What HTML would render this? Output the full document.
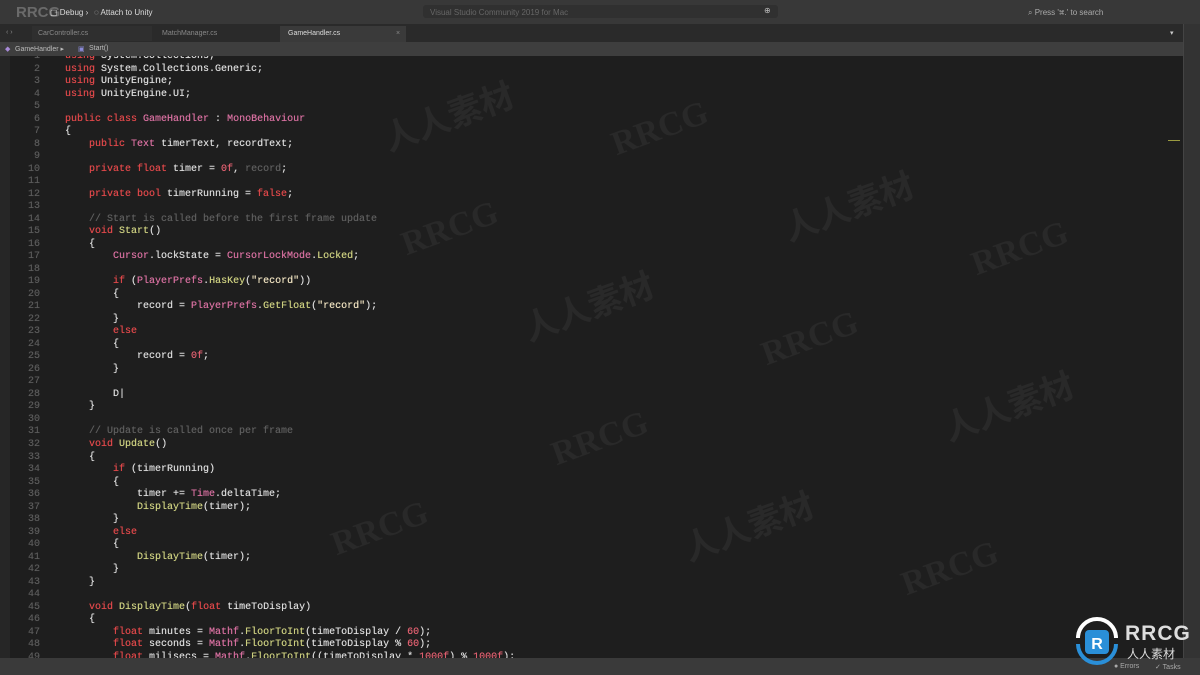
<!DOCTYPE html>
<html><head><meta charset="utf-8"><style>
*{margin:0;padding:0;box-sizing:border-box}
body{width:1200px;height:675px;background:#1f1f1f;overflow:hidden;position:relative;font-family:"Liberation Sans",sans-serif}
.top{position:absolute;left:0;top:0;width:1200px;height:24px;background:#383838;color:#ddd;font-size:8px}
.tabs{position:absolute;left:0;top:24px;width:1183px;height:18px;background:#2a2a2a;font-size:7px;color:#888}
.crumb{position:absolute;left:0;top:42px;width:1183px;height:14px;background:#3e3e3e;font-size:7px;color:#bbb}
.side{position:absolute;left:1183px;top:24px;width:17px;height:634px;background:#333;border-left:1px solid #444}
.status{position:absolute;left:0;top:658px;width:1200px;height:17px;background:#3a3a3a;font-size:7px;color:#aaa}
.editor{position:absolute;left:0;top:56px;width:1183px;height:602px;overflow:hidden;background:#1e1e1e}
.gut{position:absolute;left:0;top:0;width:10px;height:602px;background:#262626}
.code{position:absolute;left:0;top:-5px;font-family:"Liberation Mono",monospace;font-size:10px;line-height:12.51px;color:#dcdcdc;white-space:pre;text-shadow:0 0 0.4px currentColor}
.ln{display:inline-block;width:40px;text-align:right;color:#5a5a5a;margin-right:25px}
.k{color:#e0484a}.t{color:#d870a0}.m{color:#cdd080}.s{color:#efe2c0}.c{color:#5e5e5e}.n{color:#e06070}
.wm{position:absolute;color:rgba(255,255,255,0.05);font-size:34px;font-weight:bold;transform:rotate(-20deg);font-family:"Liberation Serif","Noto Sans CJK SC",serif;white-space:nowrap}
</style></head><body>
<div class="top">
<span style="position:absolute;left:50px;top:8px">▢ Debug ›</span>
<span style="position:absolute;left:94px;top:8px">◌ Attach to Unity</span>
<div style="position:absolute;left:423px;top:5px;width:355px;height:13px;background:#303030;border-radius:3px"></div>
<span style="position:absolute;left:430px;top:8px;color:#666">Visual Studio Community 2019 for Mac</span>
<span style="position:absolute;left:764px;top:6px;color:#bbb">⊕</span>
<span style="position:absolute;left:1028px;top:8px;color:#aaa">⌕ Press '⌘.' to search</span>
</div>
<div class="tabs">
<span style="position:absolute;left:6px;top:5px">‹ ›</span>
<div style="position:absolute;left:32px;top:2px;width:120px;height:15px;background:#2f2f2f"></div>
<span style="position:absolute;left:38px;top:6px">CarController.cs</span>
<span style="position:absolute;left:162px;top:6px">MatchManager.cs</span>
<div style="position:absolute;left:280px;top:2px;width:126px;height:16px;background:#3a3a3a"></div>
<span style="position:absolute;left:288px;top:6px;color:#ddd">GameHandler.cs</span>
<span style="position:absolute;left:396px;top:6px">×</span>
<span style="position:absolute;left:1170px;top:5px;color:#ccc">▾</span>
</div>
<div class="crumb">
<span style="position:absolute;left:5px;top:3px;color:#a88ad8">◆</span><span style="position:absolute;left:15px;top:3px">GameHandler ▸</span>
<span style="position:absolute;left:78px;top:3px;color:#8a8ad8">▣</span><span style="position:absolute;left:89px;top:3px">Start()</span>
</div>
<div class="editor"><div class="gut"></div>
<div class="code"><span class="ln">1</span><span class="k">using</span> System.Collections;
<span class="ln">2</span><span class="k">using</span> System.Collections.Generic;
<span class="ln">3</span><span class="k">using</span> UnityEngine;
<span class="ln">4</span><span class="k">using</span> UnityEngine.UI;
<span class="ln">5</span>
<span class="ln">6</span><span class="k">public class</span> <span class="t">GameHandler</span> : <span class="t">MonoBehaviour</span>
<span class="ln">7</span>{
<span class="ln">8</span>    <span class="k">public</span> <span class="t">Text</span> timerText, recordText;
<span class="ln">9</span>
<span class="ln">10</span>    <span class="k">private float</span> timer = <span class="n">0f</span>, <span class="c">record</span>;
<span class="ln">11</span>
<span class="ln">12</span>    <span class="k">private bool</span> timerRunning = <span class="k">false</span>;
<span class="ln">13</span>
<span class="ln">14</span>    <span class="c">// Start is called before the first frame update</span>
<span class="ln">15</span>    <span class="k">void</span> <span class="m">Start</span>()
<span class="ln">16</span>    {
<span class="ln">17</span>        <span class="t">Cursor</span>.lockState = <span class="t">CursorLockMode</span>.<span class="m">Locked</span>;
<span class="ln">18</span>
<span class="ln">19</span>        <span class="k">if</span> (<span class="t">PlayerPrefs</span>.<span class="m">HasKey</span>(<span class="s">"record"</span>))
<span class="ln">20</span>        {
<span class="ln">21</span>            record = <span class="t">PlayerPrefs</span>.<span class="m">GetFloat</span>(<span class="s">"record"</span>);
<span class="ln">22</span>        }
<span class="ln">23</span>        <span class="k">else</span>
<span class="ln">24</span>        {
<span class="ln">25</span>            record = <span class="n">0f</span>;
<span class="ln">26</span>        }
<span class="ln">27</span>
<span class="ln">28</span>        D|
<span class="ln">29</span>    }
<span class="ln">30</span>
<span class="ln">31</span>    <span class="c">// Update is called once per frame</span>
<span class="ln">32</span>    <span class="k">void</span> <span class="m">Update</span>()
<span class="ln">33</span>    {
<span class="ln">34</span>        <span class="k">if</span> (timerRunning)
<span class="ln">35</span>        {
<span class="ln">36</span>            timer += <span class="t">Time</span>.deltaTime;
<span class="ln">37</span>            <span class="m">DisplayTime</span>(timer);
<span class="ln">38</span>        }
<span class="ln">39</span>        <span class="k">else</span>
<span class="ln">40</span>        {
<span class="ln">41</span>            <span class="m">DisplayTime</span>(timer);
<span class="ln">42</span>        }
<span class="ln">43</span>    }
<span class="ln">44</span>
<span class="ln">45</span>    <span class="k">void</span> <span class="m">DisplayTime</span>(<span class="k">float</span> timeToDisplay)
<span class="ln">46</span>    {
<span class="ln">47</span>        <span class="k">float</span> minutes = <span class="t">Mathf</span>.<span class="m">FloorToInt</span>(timeToDisplay / <span class="n">60</span>);
<span class="ln">48</span>        <span class="k">float</span> seconds = <span class="t">Mathf</span>.<span class="m">FloorToInt</span>(timeToDisplay % <span class="n">60</span>);
<span class="ln">49</span>        <span class="k">float</span> milisecs = <span class="t">Mathf</span>.<span class="m">FloorToInt</span>((timeToDisplay * <span class="n">1000f</span>) % <span class="n">1000f</span>);
</div>
<div style="position:absolute;left:1168px;top:84px;width:12px;height:1px;background:#9a9a40"></div>
</div>
<div class="wm" style="left:380px;top:90px">人人素材</div>
<div class="wm" style="left:610px;top:110px">RRCG</div>
<div class="wm" style="left:400px;top:210px">RRCG</div>
<div class="wm" style="left:780px;top:180px">人人素材</div>
<div class="wm" style="left:970px;top:230px">RRCG</div>
<div class="wm" style="left:520px;top:280px">人人素材</div>
<div class="wm" style="left:760px;top:320px">RRCG</div>
<div class="wm" style="left:940px;top:380px">人人素材</div>
<div class="wm" style="left:550px;top:420px">RRCG</div>
<div class="wm" style="left:330px;top:510px">RRCG</div>
<div class="wm" style="left:680px;top:500px">人人素材</div>
<div class="wm" style="left:900px;top:550px">RRCG</div>
<div class="side"></div>
<div class="status">
<span style="position:absolute;left:1114px;top:5px">● Errors</span>
<span style="position:absolute;left:1155px;top:5px">✓ Tasks</span>
</div>
<svg style="position:absolute;left:1072px;top:616px" width="50" height="50" viewBox="0 0 50 50">
<path d="M6 22 A19 19 0 0 1 44 22" fill="none" stroke="#fff" stroke-width="4"/>
<path d="M6 28 A19 19 0 0 0 44 28" fill="none" stroke="#2a8fd8" stroke-width="4"/>
<rect x="13" y="14" width="24" height="24" rx="4" fill="#2a8fd8"/>
<text x="25" y="33" font-size="16" font-weight="bold" fill="#fff" text-anchor="middle" font-family="Liberation Sans">R</text>
</svg>
<div style="position:absolute;left:1125px;top:622px;color:#ddd;font-size:21px;font-weight:bold;letter-spacing:1px">RRCG</div>
<div style="position:absolute;left:1127px;top:645px;color:#ddd;font-size:12px;font-family:'Liberation Sans','Noto Sans CJK SC',sans-serif">人人素材</div>
<div style="position:absolute;left:16px;top:4px;color:rgba(255,255,255,0.25);font-size:15px;font-weight:bold">RRCG</div>
</body></html>
